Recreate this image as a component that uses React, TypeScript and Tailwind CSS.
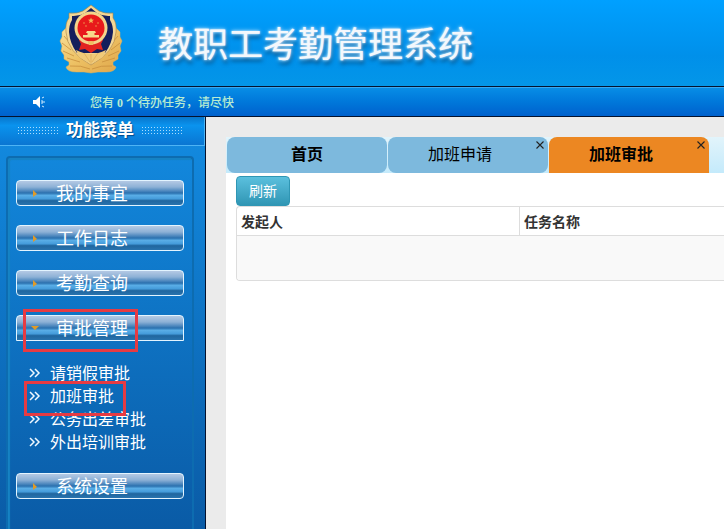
import React, { useState } from 'react';

const menuItems = [
  { key: 'mine', label: '我的事宜', children: [] },
  { key: 'log', label: '工作日志', children: [] },
  { key: 'query', label: '考勤查询', children: [] },
  {
    key: 'approve',
    label: '审批管理',
    children: ['请销假审批', '加班审批', '公务出差审批', '外出培训审批'],
  },
  { key: 'settings', label: '系统设置', children: [] },
];

const tabs = [
  { label: '首页', closable: false, bold: true },
  { label: '加班申请', closable: true, bold: false },
  { label: '加班审批', closable: true, bold: true },
];

function Emblem() {
  return (
    <svg className="w-[64px] h-[72px] shrink-0" viewBox="0 0 64 72" aria-hidden="true">
      <defs>
        <linearGradient id="gold" x1="0" y1="0" x2="1" y2="1">
          <stop offset="0" stopColor="#f8e09a" />
          <stop offset="0.5" stopColor="#edc164" />
          <stop offset="1" stopColor="#dfa548" />
        </linearGradient>
      </defs>
      {/* wreath */}
      <path
        d="M7 24 L3 28 L3 33 L1 37 L3 42 L2 47 L5 51 L5 55 L10 58 L10 61 L7 63 Q8 68 18 68 L25 68 L32 69 L39 68 L47 68 Q56 68 57 63 L54 61 L54 58 L59 55 L59 51 L62 47 L61 42 L63 37 L61 33 L61 28 L57 24 Z"
        fill="url(#gold)"
        stroke="#dcae5c"
        strokeWidth="0.5"
      />
      <path
        d="M5 32 L11 39 M3 39 L12 46 M4 47 L15 52 M8 54 L21 58 M59 32 L53 39 M61 39 L52 46 M60 47 L49 52 M56 54 L43 58 M11 62 Q22 61 31 65 M53 62 Q42 61 33 65"
        stroke="#c98f3c"
        strokeWidth="0.8"
        fill="none"
      />
      {/* shield */}
      <path
        d="M32 1 L24 7 Q18 10 10 9 L10 14 Q6 19 7 28 Q8 48 32 61 Q56 48 57 28 Q58 19 54 14 L54 9 Q46 10 40 7 Z"
        fill="#f3d795"
        stroke="#a8803f"
        strokeWidth="0.6"
      />
      <path
        d="M32 4 L26 9 Q20 12.500 13 12 L13 16 Q10 21 10 28 Q11 40 18 49 L46 49 Q53 40 54 28 Q54 21 51 16 L51 12 Q44 12.500 38 9 Z"
        fill="#141e5c"
      />
      <path d="M17 46 Q25 50 32 50 Q39 50 47 46 L44 53 L32 60 L20 53 Z" fill="#f0ca78" />
      <path d="M20 36 L44 36 L42 40 L44 46 L38 45 L32 49 L26 45 L20 46 L22 40 Z" fill="#e3241f" />
      {/* round badge */}
      <circle cx="32" cy="24" r="16.5" fill="#f3d48b" />
      <circle cx="32" cy="24" r="13.500" fill="#e8191b" />
      <path
        d="M32 13.500 L32.800 15.600 L35 15.700 L33.300 17.100 L33.900 19.300 L32 18 L30.100 19.300 L30.700 17.100 L29 15.700 L31.200 15.600 Z"
        fill="#f5b75a"
      />
      <g fill="#f0964c">
        <circle cx="25" cy="19" r="0.8" />
        <circle cx="27" cy="22" r="0.8" />
        <circle cx="37" cy="22" r="0.8" />
        <circle cx="39" cy="19" r="0.8" />
      </g>
      <path d="M28 27 L36 27 L37 29 L35.500 29 L35.500 31 L40 31 L40 33.500 L24 33.500 L24 31 L28.500 31 L28.500 29 L27 29 Z" fill="#f7d98b" />
      <path d="M29 38 Q32 36 35 38 L34 41 L30 41 Z" fill="#f0bf63" />
      <path d="M32 50 L32 60 M25 49 L31 58 M39 49 L33 58" stroke="#dba955" strokeWidth="0.7" fill="none" />
    </svg>
  );
}

function Dots() {
  return (
    <svg className="w-[40px] h-[8px]" viewBox="0 0 40 8" aria-hidden="true">
      <defs>
        <pattern id="dots" width="3" height="3" patternUnits="userSpaceOnUse">
          <rect width="1" height="1" fill="#a9dcff" />
        </pattern>
      </defs>
      <rect width="40" height="8" fill="url(#dots)" />
    </svg>
  );
}

export default function App() {
  const [open, setOpen] = useState('approve');
  const [active, setActive] = useState('加班审批');

  return (
    <div className="flex flex-col min-h-screen bg-[#ebebeb] font-['Liberation_Sans','Noto_Sans_CJK_SC',sans-serif]">
      {/* Banner */}
      <header className="flex items-center gap-[35px] h-[87px] pl-[59px] pb-[6px] border-b border-[#04122e] bg-linear-to-b from-[#00a0ff] via-[#0090ea] via-65% to-[#0496e8]">
        <Emblem />
        <h1 className="pt-1 text-[35px] leading-[40px] font-normal text-[#f4f8fc] whitespace-nowrap font-['Noto_Sans_CJK_SC',sans-serif] [text-shadow:0_0_2px_#d6edff,0_0_4px_#b5e2ff,1px_4px_4px_#044a80]">
          教职工考勤管理系统
        </h1>
      </header>

      {/* Notice bar */}
      <div className="flex items-center h-[30px] pl-8 gap-[43px] border-t border-b border-t-[#3aa9ee] border-b-[#04122e] bg-linear-to-b from-[#088de6] to-[#0061cd]">
        <svg className="w-[15px] h-[14px]" viewBox="0 0 15 14" aria-hidden="true">
          <path d="M1 5 H4 L8 1 V13 L4 9 H1 Z" fill="#fff" />
          <path d="M10 3 L12 2 M10 7 H13 M10 11 L12 12 M10 5 V9" stroke="#cfeaff" strokeWidth="1" />
        </svg>
        <p className="pt-[2px] whitespace-nowrap text-[12px] leading-[18px] font-medium text-[#b8ecd0] font-['Liberation_Serif','Noto_Sans_CJK_SC',serif]">
          您有 <b>0</b> 个待办任务，请尽快
        </p>
      </div>

      <div className="flex flex-1">
        {/* Sidebar */}
        <aside className="flex flex-col w-[206px] shrink-0 border-r border-[#04122e] bg-linear-to-b from-[#138ce2] to-[#0a5ba6]">
          <div className="flex items-center justify-center gap-2 h-[29px] pr-1 border-r border-b border-[#4db4f5] bg-linear-to-b from-[#0876cc] via-[#0a93ee] via-30% to-[#0a76d2]">
            <Dots />
            <h2 className="text-[17px] leading-[20px] font-bold text-white whitespace-nowrap [text-shadow:1px_1px_1px_#034a8c]">
              功能菜单
            </h2>
            <Dots />
          </div>
          <nav className="flex-1 mt-[10px] ml-[6px] mr-[11px] px-2 pt-[22px] rounded-t-sm border-2 border-b-0 border-[#0d6cb0] shadow-[inset_2px_2px_1px_#1683c4]">
            <ul className="flex flex-col gap-[19px]">
              {menuItems.map((item) => {
                const expanded = item.children.length > 0 && open === item.key;
                return (
                  <li key={item.key} className="relative">
                    <button
                      onClick={() => setOpen(expanded ? '' : item.key)}
                      className={`flex items-center w-full h-[26px] pt-[2px] pl-[13px] gap-[16px] border border-[#e3f4ff] text-[18px] leading-[24px] text-white [background-image:linear-gradient(to_bottom,#b4c9e4_0%,#8db1d6_25%,#4b86bd_42%,#2a70ae_50%,#59ade6_60%,#459cdb_74%,#20669f_82%,#2873ae_100%)] cursor-pointer ${
                        expanded ? 'rounded-t-[4px]' : 'rounded-[4px]'
                      }`}
                    >
                      <svg className="w-[10px] h-[10px] shrink-0" viewBox="0 0 10 10" aria-hidden="true">
                        <path d={expanded ? 'M1 2 H9 L5 6 Z' : 'M3 1 L7 5 L3 8 Z'} fill="#df9a28" />
                      </svg>
                      <span>{item.label}</span>
                    </button>
                    {item.key === 'approve' && (
                      <div className="absolute left-[7px] -top-[6px] w-[115px] h-[43px] border-3 border-[#e63b43] pointer-events-none" />
                    )}
                    {expanded && (
                      <ul className="pt-[21px]">
                        {item.children.map((child) => (
                          <li key={child} className="relative h-[23px]">
                            <a
                              href="#"
                              onClick={() => setActive(child)}
                              className="flex items-center gap-[9px] pl-[13px] text-[16px] leading-[23px] text-white"
                            >
                              <svg className="w-[12px] h-[12px] shrink-0" viewBox="0 0 12 12" fill="none" stroke="#f0f8ff" strokeWidth="1.5" aria-hidden="true">
                                <path d="M1 1 L5 5 L1 9 M6 1 L10 5 L6 9" />
                              </svg>
                              <span>{child}</span>
                            </a>
                            {child === '加班审批' && (
                              <div className="absolute z-10 left-2 -top-[4px] w-[102px] h-[35px] border-3 border-[#e63b43] pointer-events-none" />
                            )}
                          </li>
                        ))}
                      </ul>
                    )}
                  </li>
                );
              })}
            </ul>
          </nav>
        </aside>

        {/* Content */}
        <main className="flex flex-col flex-1 min-w-0 pt-5 pl-5 overflow-hidden">
          <div className="flex gap-px pl-px h-9 bg-linear-to-b from-[#e2f4fb] to-[#c4eafb]">
            {tabs.map((tab) => (
              <div
                key={tab.label}
                className={`relative w-[160px] shrink-0 ${
                  active === tab.label ? 'bg-[#ec8722] rounded-t-lg' : 'bg-[#7db9dd] rounded-lg'
                }`}
              >
                <button
                  onClick={() => setActive(tab.label)}
                  className={`w-full h-full text-[16px] leading-[20px] text-black cursor-pointer ${
                    tab.bold ? 'font-bold' : ''
                  } ${tab.closable ? 'pr-4' : ''}`}
                >
                  {tab.label}
                </button>
                {tab.closable && (
                  <button aria-label={`关闭 ${tab.label}`} className="absolute top-1 right-1 cursor-pointer">
                    <svg className="block w-[8px] h-[8px]" viewBox="0 0 8 8" stroke="#222" strokeWidth="1.1" aria-hidden="true">
                      <path d="M0.500 0.500 L7.500 7.500 M7.500 0.500 L0.500 7.500" />
                    </svg>
                  </button>
                )}
              </div>
            ))}
          </div>

          <div className="flex-1 bg-white pt-[3px] pl-[10px]">
            <button className="block h-[30px] px-3 rounded-[4px] border border-[#2f96b4] bg-linear-to-b from-[#5bc0de] to-[#2f96b4] text-[14px] leading-[20px] text-white cursor-pointer">
              刷新
            </button>
            <div className="border border-r-0 border-[#dddddd] rounded-l-[4px] overflow-hidden">
              <table className="w-full table-fixed text-[14px] leading-[20px] text-[#333333]">
                <thead>
                  <tr>
                    <th className="w-[58%] h-[28px] pt-[2px] px-1 text-left font-bold">发起人</th>
                    <th className="h-[28px] pt-[2px] px-1 text-left font-bold border-l border-[#dddddd]">任务名称</th>
                  </tr>
                </thead>
                <tbody>
                  <tr>
                    <td colSpan={2} className="h-[45px] border-t border-[#dddddd] bg-[#f9f9f9]" />
                  </tr>
                </tbody>
              </table>
            </div>
          </div>
        </main>
      </div>
    </div>
  );
}
